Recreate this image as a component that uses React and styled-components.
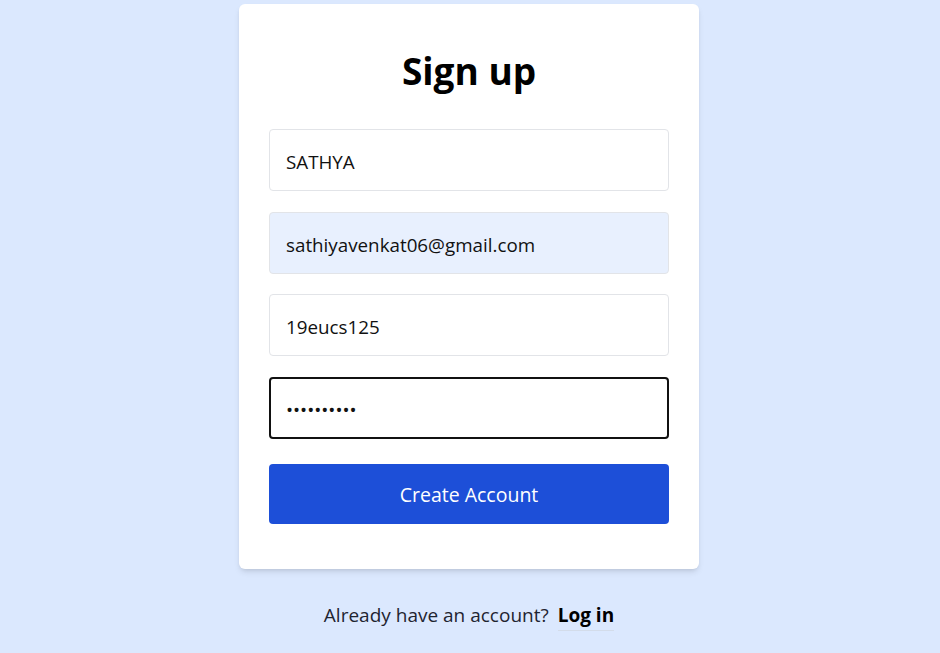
import React, { useState } from "react";
import styled, { createGlobalStyle } from "styled-components";

const GlobalStyle = createGlobalStyle`
  html, body {
    margin: 0;
    padding: 0;
    background: #dbe8fe;
  }
  body {
    font-family: "Open Sans", "Noto Sans", sans-serif;
  }
  * {
    box-sizing: border-box;
  }
`;

const Page = styled.div`
  min-height: 653px;
  display: flex;
  flex-direction: column;
  align-items: center;
  padding: 4px 2px 0 0;
`;

const Card = styled.div`
  width: 460px;
  background: #ffffff;
  border-radius: 6px;
  box-shadow: 0 4px 6px -1px rgba(0, 0, 0, 0.1), 0 2px 4px -2px rgba(0, 0, 0, 0.1);
  padding: 38px 30px 45px;
`;

const Title = styled.h1`
  margin: 0 0 30px;
  text-align: center;
  font-size: 37px;
  font-weight: 700;
  line-height: 57px;
  color: #000000;
`;

const Form = styled.form`
  display: flex;
  flex-direction: column;
  gap: 20.67px;
`;

const Input = styled.input`
  width: 100%;
  height: 62px;
  padding: 4px 16px 0;
  font-family: inherit;
  font-size: 18.8px;
  color: #111111;
  background: ${(p) => (p.$filled ? "#e8f0fe" : "#ffffff")};
  border: 1px solid #e2e4e8;
  border-radius: 4px;
  outline: none;

  &:focus {
    border: 2px solid #111111;
    padding: 4px 15px 0;
  }
`;

const Button = styled.button`
  margin-top: 4px;
  height: 60px;
  padding-top: 2px;
  width: 100%;
  border: none;
  border-radius: 4px;
  background: #1d4fd8;
  color: #ffffff;
  font-family: inherit;
  font-size: 19.5px;
  cursor: pointer;
`;

const Footer = styled.p`
  margin: 33px 0 0;
  font-size: 19px;
  color: #1f2430;
`;

const LoginLink = styled.a`
  margin-left: 9px;
  font-weight: 700;
  color: #000000;
  text-decoration: none;
  border-bottom: 1px solid #d3dcea;
  padding-bottom: 2px;
  cursor: pointer;
`;

export default function App() {
  const [name, setName] = useState("SATHYA");
  const [email, setEmail] = useState("sathiyavenkat06@gmail.com");
  const [roll, setRoll] = useState("19eucs125");
  const [password, setPassword] = useState("abcdefghij");

  return (
    <>
      <GlobalStyle />
      <Page>
        <Card>
          <Title>Sign up</Title>
          <Form onSubmit={(e) => e.preventDefault()}>
            <Input value={name} onChange={(e) => setName(e.target.value)} />
            <Input
              $filled
              value={email}
              onChange={(e) => setEmail(e.target.value)}
            />
            <Input value={roll} onChange={(e) => setRoll(e.target.value)} />
            <Input
              type="password"
              autoFocus
              value={password}
              onChange={(e) => setPassword(e.target.value)}
            />
            <Button type="submit">Create Account</Button>
          </Form>
        </Card>
        <Footer>
          Already have an account?
          <LoginLink>Log in</LoginLink>
        </Footer>
      </Page>
    </>
  );
}
